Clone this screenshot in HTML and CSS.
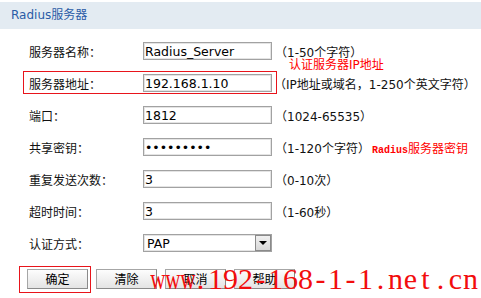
FILE: index.html
```html
<!DOCTYPE html>
<html lang="zh-CN">
<head>
    <meta charset="UTF-8">
    <title>Radius服务器</title>
    <link rel="stylesheet" href="styles.css">
</head>
<body>
    <div class="panel-title">Radius服务器</div>
    <div class="form">
        <div class="row">
            <label class="label">服务器名称：</label>
            <input class="field" type="text" value="Radius_Server">
            <span class="hint"><i>（</i>1-50个字符<i>）</i></span>
            <span class="note note-ip">认证服务器IP地址</span>
        </div>
        <div class="row marked">
            <label class="label">服务器地址：</label>
            <input class="field" type="text" value="192.168.1.10">
            <span class="hint"><i>（</i>IP地址或域名<i>，</i>1-250个英文字符<i>）</i></span>
        </div>
        <div class="row">
            <label class="label">端口：</label>
            <input class="field" type="text" value="1812">
            <span class="hint"><i>（</i>1024-65535<i>）</i></span>
        </div>
        <div class="row">
            <label class="label">共享密钥：</label>
            <input class="field" type="password" value="123456789">
            <span class="hint"><i>（</i>1-120个字符<i>）</i></span>
            <span class="note"><span class="mono">Radius</span>服务器密钥</span>
        </div>
        <div class="row">
            <label class="label">重复发送次数：</label>
            <input class="field" type="text" value="3">
            <span class="hint"><i>（</i>0-10次<i>）</i></span>
        </div>
        <div class="row">
            <label class="label">超时时间：</label>
            <input class="field" type="text" value="3">
            <span class="hint"><i>（</i>1-60秒<i>）</i></span>
        </div>
        <div class="row">
            <label class="label">认证方式：</label>
            <div class="select">
                <span class="select-value">PAP</span>
                <span class="select-arrow"></span>
            </div>
        </div>
    </div>
    <div class="buttons">
        <div class="btn-wrap marked-btn"><button class="btn">确定</button></div>
        <button class="btn">清除</button>
        <button class="btn">取消</button>
        <button class="btn">帮助</button>
    </div>
    <div class="watermark"><span class="w">w</span><span class="w">w</span><span class="w">w</span><span>.</span><span>1</span><span>9</span><span>2</span><span>-</span><span>1</span><span>6</span><span>8</span><span>-</span><span>1</span><span>-</span><span>1</span><span>.</span><span>n</span><span>e</span><span>t</span><span>.</span><span>c</span><span>n</span></div>
</body>
</html>
```

FILE: styles.css
```css
body {
    margin: 0;
    padding-top: 2px;
    background-color: #fff;
    font-family: "DejaVu Sans", "Noto Sans CJK SC", sans-serif;
    font-size: 12px;
    color: #111;
    position: relative;
    width: 481px;
    height: 298px;
    overflow: hidden;
}
.panel-title {
    height: 27px;
    line-height: 27px;
    padding-left: 11px;
    background-color: #e3ebf2;
    color: #2a5ca6;
    font-size: 12px;
}
.form {
    margin-top: 6px;
}
.row {
    position: relative;
    display: flex;
    align-items: center;
    height: 32px;
    padding-left: 29px;
}
.label {
    width: 114px;
    flex-shrink: 0;
}
.field {
    width: 129px;
    height: 18px;
    box-sizing: border-box;
    margin: 0;
    padding: 0 1px;
    border: 1px solid #a2a2a2;
    box-shadow: inset 0 0 0 1px #e4e4e4;
    font-family: "DejaVu Sans", sans-serif;
    font-size: 12.5px;
    color: #000;
    outline: none;
}
.hint {
    margin-left: 3px;
    white-space: nowrap;
}
.hint i {
    font-style: normal;
    font-family: "Noto Sans CJK SC", sans-serif;
}
.marked::before {
    content: '';
    position: absolute;
    left: 23px;
    top: 4px;
    width: 254px;
    height: 23px;
    border: 1px solid #e8141b;
    box-sizing: border-box;
    pointer-events: none;
}
.marked .hint {
    margin-left: 2px;
}
.note {
    color: #f00;
    font-size: 12px;
    white-space: nowrap;
    margin-left: 2px;
}
.note-ip {
    position: absolute;
    left: 289px;
    top: 23px;
    margin-left: 0;
    line-height: 14px;
}
.mono {
    font-family: "Liberation Mono", monospace;
    font-size: 10px;
    font-weight: bold;
}
.select {
    display: flex;
    align-items: center;
    width: 129px;
    height: 18px;
    box-sizing: border-box;
    border: 1px solid #a2a2a2;
    box-shadow: inset 0 0 0 1px #e4e4e4;
}
.select-value {
    flex: 1;
    padding-left: 3px;
    font-family: "DejaVu Sans", sans-serif;
    font-size: 12.5px;
    color: #000;
}
.select-arrow {
    position: relative;
    width: 16px;
    height: 16px;
    box-sizing: border-box;
    background: linear-gradient(#f0f0f0, #d8d8d8);
    border: 1px solid #8a8a8a;
}
.select-arrow::after {
    content: '';
    position: absolute;
    left: 3px;
    top: 5px;
    border-left: 4px solid transparent;
    border-right: 4px solid transparent;
    border-top: 4px solid #000;
}
.buttons {
    display: flex;
    gap: 8px;
    margin-top: 10px;
    padding-left: 27px;
}
.btn-wrap {
    position: relative;
    display: flex;
}
.marked-btn::before {
    content: '';
    position: absolute;
    left: -8px;
    right: -3px;
    top: -3px;
    bottom: -4px;
    border: 1px solid #e8141b;
    pointer-events: none;
}
.btn {
    width: 61px;
    height: 20px;
    margin: 0;
    padding: 0;
    border: 1px solid #a6a6a6;
    border-right-color: #8a8a8a;
    border-bottom-color: #8a8a8a;
    background: linear-gradient(#fdfdfd, #e4e4e4);
    font-family: "Noto Sans CJK SC", sans-serif;
    font-size: 12px;
    color: #000;
    line-height: 18px;
}
.watermark {
    position: absolute;
    left: 148px;
    top: 262px;
    display: flex;
    font-family: "Liberation Serif", serif;
    font-size: 30px;
    line-height: 34px;
    color: #f20d0d;
    pointer-events: none;
}
.watermark span {
    display: inline-block;
    width: 15px;
    text-align: center;
}
.watermark .w {
    transform: scaleX(0.7);
}
```
